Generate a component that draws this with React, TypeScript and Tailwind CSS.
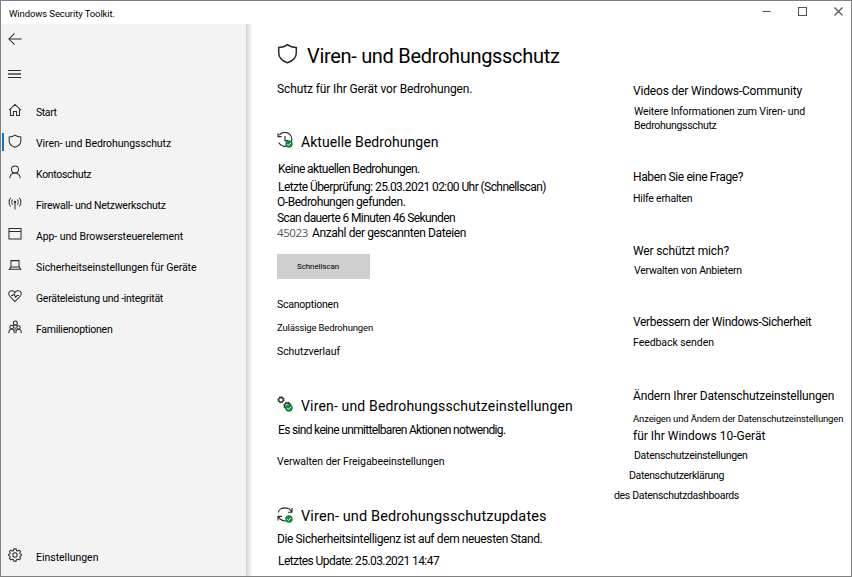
import type { ReactNode } from "react";

function Svg({ size = 14, box = 16, className = "", children }: { size?: number; box?: number; className?: string; children: ReactNode }) {
  return (
    <svg
      width={size}
      height={size}
      viewBox={`0 0 ${box} ${box}`}
      fill="none"
      stroke="#2b2b2b"
      strokeWidth="1.15"
      className={`shrink-0 ${className}`}
    >
      {children}
    </svg>
  );
}

const Shield = () => <path d="M8 1.2C6.2 2.7 4 3.4 1.3 3.4V7.6C1.3 11.2 3.8 13.6 8 15.1C12.2 13.6 14.7 11.2 14.7 7.6V3.4C12 3.4 9.8 2.7 8 1.2Z" />;

const Check = () => (
  <>
    <circle cx="12" cy="12" r="3.7" fill="#10893e" stroke="none" />
    <path d="M10.2 12.1L11.6 13.4L13.9 10.9" stroke="#fff" strokeWidth="1" />
  </>
);

const navItems: { label: string; spacing: string; icon: ReactNode; active?: boolean }[] = [
  {
    label: "Start",
    spacing: "tracking-[-0.4px]",
    icon: <path d="M1.2 8.2L8 1.6L14.8 8.2M2.8 6.8V14.3H6.2V9.6H9.8V14.3H13.2V6.8" />,
  },
  { label: "Viren- und Bedrohungsschutz", spacing: "tracking-[-0.07px]", icon: <Shield />, active: true },
  {
    label: "Kontoschutz",
    spacing: "tracking-[-0.32px]",
    icon: (
      <>
        <circle cx="8" cy="5.2" r="4" />
        <path d="M2 15.2C2.3 11.6 4.6 9.2 8 9.2S13.7 11.6 14 15.2" />
      </>
    ),
  },
  {
    label: "Firewall- und Netzwerkschutz",
    spacing: "tracking-[-0.26px]",
    icon: (
      <>
        <path d="M3.2 2C.6 4.4.6 9.6 3.2 12M12.8 2C15.4 4.4 15.4 9.6 12.8 12M5.4 4C4 5.6 4 8.4 5.4 10M10.6 4C12 5.6 12 8.4 10.6 10M8 7.4V15.4" />
        <circle cx="8" cy="6.8" r=".9" />
      </>
    ),
  },
  {
    label: "App- und Browsersteuerelement",
    spacing: "tracking-[-0.09px]",
    icon: <path d="M1.1 1.7H14.9V13.7H1.1ZM1.1 5.1H14.9" />,
  },
  {
    label: "Sicherheitseinstellungen für Geräte",
    spacing: "tracking-[-0.08px]",
    icon: <path d="M3.4 3H12.6V10.2H3.4ZM3.4 10.2L1.4 12.8H14.6L12.6 10.2" />,
  },
  {
    label: "Geräteleistung und -integrität",
    spacing: "tracking-[-0.28px]",
    icon: (
      <>
        <path d="M8 14.4L1.8 8C.2 6.2.6 3.6 2.5 2.5C4.4 1.4 6.8 2 8 4.2C9.2 2 11.6 1.4 13.5 2.5C15.4 3.6 15.8 6.2 14.2 8Z" />
        <path d="M3.4 7.4H5.2L6.8 5.6L8.8 9.4L10.4 7.4H12.6" />
      </>
    ),
  },
  {
    label: "Familienoptionen",
    spacing: "tracking-[-0.26px]",
    icon: (
      <>
        <circle cx="8.4" cy="3.4" r="2.3" />
        <circle cx="4.2" cy="8.2" r="2.1" />
        <circle cx="12" cy="8.6" r="2" />
        <path d="M1 15C1 12.4 2 10.4 4.2 10.4S7.2 12.4 7.2 15M9 15C9 12.2 10 10.6 12 10.6S15.2 12.2 15.2 15M5.6 6.4C6.4 5.9 7.2 5.7 8.4 5.7S10.6 6 11.2 6.6M8.1 8.4V12" />
      </>
    ),
  },
];

const gear = "M6.7 1L9.3 1L9.7 2.9L11.2 3.5L12.8 2.4L14.4 4L13.4 5.7L14 7L15.2 7.2V8.8L14 9.2L13.4 10.5L14.4 12L12.8 13.6L11.2 12.6L9.7 13.2L9.3 15H6.7L6.3 13.2L4.8 12.6L3.2 13.6L1.6 12L2.6 10.5L2 9.2L.8 8.8V7.2L2 7L2.6 5.7L1.6 4L3.2 2.4L4.8 3.5L6.3 2.9Z";

function Sidebar() {
  return (
    <nav className="flex w-[245px] shrink-0 flex-col bg-[#f3f3f3]">
      <div className="flex h-[30px] items-center pl-[7px]">
        <Svg size={14}>
          <path d="M15.5 8H1M7.5 1.5L1 8L7.5 14.5" />
        </Svg>
      </div>
      <div className="flex h-[43px] items-start pt-4 pl-[7px]">
        <div className="flex w-[13px] flex-col gap-[2px]">
          <span className="h-px bg-[#2b2b2b]" />
          <span className="h-[2px] bg-[#6e6e6e]" />
          <span className="h-px bg-[#2b2b2b]" />
        </div>
      </div>
      <ul>
        {navItems.map((item) => (
          <li key={item.label} className="flex h-[31px] items-center">
            <span className={`mb-[3px] ml-px h-[18px] w-[2px] ${item.active ? "bg-[#0078d4]" : ""}`} />
            <Svg className="mb-[5px] ml-1">{item.icon}</Svg>
            <span className={`ml-[14px] text-[10.5px] whitespace-nowrap ${item.spacing}`}>{item.label}</span>
          </li>
        ))}
      </ul>
      <div className="mt-auto mb-[3px] flex h-[31px] items-center pl-[7px]">
        <Svg className="mb-[5px]">
          <path d={gear} />
          <circle cx="8" cy="8" r="2.5" />
        </Svg>
        <span className="ml-[14px] text-[10.5px] tracking-[-0.02px]">Einstellungen</span>
      </div>
    </nav>
  );
}

function Heading({ icon, className, children }: { icon: ReactNode; className: string; children: ReactNode }) {
  return (
    <h2 className={`flex h-4 items-center whitespace-nowrap ${className}`}>
      <Svg size={16} className="mr-2 mb-1">{icon}</Svg>
      {children}
    </h2>
  );
}

function Line({ className, children }: { className: string; children: ReactNode }) {
  return <p className={`h-[14px] leading-[14px] whitespace-nowrap ${className}`}>{children}</p>;
}

function Content() {
  return (
    <main className="w-[337px] shrink-0 pt-[19px]">
      <h1 className="flex h-6 items-center pt-px text-[20px] tracking-[-0.31px] whitespace-nowrap">
        <Svg size={21} className="mr-[9px] mb-[5px]">
          <Shield />
        </Svg>
        <span className="pt-px">Viren- und Bedrohungsschutz</span>
      </h1>
      <Line className="mt-[15px] text-[12px] tracking-[-0.12px]">Schutz für Ihr Gerät vor Bedrohungen.</Line>

      <section className="mt-[38px]">
        <Heading
          className="text-[14px] tracking-[0.05px]"
          icon={
            <>
              <path d="M2.2 3.2A7 7 0 1 1 1.6 10.6M1 1.2V4.6H4.6M8 4V8.6H11" />
              <Check />
            </>
          }
        >
          Aktuelle Bedrohungen
        </Heading>
        <Line className="mt-3 pl-px text-[12px] tracking-[-0.59px]">Keine aktuellen Bedrohungen.</Line>
        <Line className="mt-1 pl-px text-[12px] tracking-[-0.57px]">Letzte Überprüfung: 25.03.2021 02:00 Uhr (Schnellscan)</Line>
        <Line className="mt-px text-[12px] tracking-[-0.46px]">O-Bedrohungen gefunden.</Line>
        <Line className="mt-0.5 text-[12px] tracking-[-0.61px]">Scan dauerte 6 Minuten 46 Sekunden</Line>
        <Line className="mt-px flex text-[12px] tracking-[-0.4px]">
          <span className="w-[35px] font-['Open_Sans',sans-serif] text-[11.5px] tracking-[-0.4px] text-[#555]">45023</span>
          <span>Anzahl der gescannten Dateien</span>
        </Line>
        <button className="mt-3.5 flex h-[25px] w-[93px] items-center bg-[#cfcfcf] pt-px pl-5 text-[8px] tracking-[-0.09px]">Schnellscan</button>
        <Line className="mt-[18px] pt-px text-[10.5px] tracking-[-0.23px]">Scanoptionen</Line>
        <Line className="mt-2.5 text-[9.5px] tracking-[-0.16px]">Zulässige Bedrohungen</Line>
        <Line className="mt-[9px] pt-px text-[10.5px] tracking-[-0.06px]">Schutzverlauf</Line>
      </section>

      <section className="mt-10">
        <Heading
          className="text-[14px] tracking-[0.16px]"
          icon={
            <>
              <circle cx="4" cy="3.8" r="2.3" strokeWidth="1.3" />
              <circle cx="4" cy="3.8" r="3.2" strokeWidth="1" strokeDasharray="1.25 1.26" />
              <circle cx="10.4" cy="9.8" r="2.8" strokeWidth="1.3" />
              <circle cx="10.4" cy="9.8" r="3.7" strokeWidth="1" strokeDasharray="1.45 1.46" />
              <Check />
            </>
          }
        >
          Viren- und Bedrohungsschutzeinstellungen
        </Heading>
        <Line className="mt-[9px] pl-px text-[12px] tracking-[-0.67px]">Es sind keine unmittelbaren Aktionen notwendig.</Line>
        <Line className="mt-[17px] pt-px text-[10.5px] tracking-[-0.06px]">Verwalten der Freigabeeinstellungen</Line>
      </section>

      <section className="mt-[41px]">
        <Heading
          className="text-[14.5px] tracking-[0.13px]"
          icon={
            <>
              <path d="M1.2 5.4C2.2 2.2 5 .8 8 .8C10.8 .8 13.4 2.2 14.6 5M15 1V5.2H11M9 14C5.8 14.2 2.8 12.6 1.4 9.6M1 13.4V9.4H5" />
              <Check />
            </>
          }
        >
          Viren- und Bedrohungsschutzupdates
        </Heading>
        <Line className="mt-[7px] text-[12px] tracking-[-0.38px]">Die Sicherheitsintelligenz ist auf dem neuesten Stand.</Line>
        <Line className="mt-2 pl-px text-[12px] tracking-[-0.57px]">Letztes Update: 25.03.2021 14:47</Line>
      </section>
    </main>
  );
}

function HelpPanel() {
  return (
    <aside className="pt-[60px]">
      <section className="pl-[19px]">
        <Line className="text-[12px] tracking-[-0.17px]">Videos der Windows-Community</Line>
        <Line className="mt-1.5 pt-px pl-px text-[10.5px] tracking-[-0.15px]">Weitere Informationen zum Viren- und</Line>
        <Line className="pt-px pl-px text-[10.5px] tracking-[-0.3px]">Bedrohungsschutz</Line>
      </section>
      <section className="mt-[38px] pl-[19px]">
        <Line className="text-[12px] tracking-[-0.38px]">Haben Sie eine Frage?</Line>
        <Line className="mt-[7px] pt-px text-[10.5px] tracking-[-0.2px]">Hilfe erhalten</Line>
      </section>
      <section className="mt-[39px] pl-[19px]">
        <Line className="text-[12px] tracking-[-0.14px]">Wer schützt mich?</Line>
        <Line className="mt-[5px] pt-px pl-px text-[10.5px] tracking-[-0.25px]">Verwalten von Anbietern</Line>
      </section>
      <section className="mt-[38px] pl-[19px]">
        <Line className="text-[12px] tracking-[-0.32px]">Verbessern der Windows-Sicherheit</Line>
        <Line className="mt-1.5 pt-px text-[10.5px] tracking-[-0.06px]">Feedback senden</Line>
      </section>
      <section className="mt-10">
        <Line className="pl-[19px] text-[12px] tracking-[-0.14px]">Ändern Ihrer Datenschutzeinstellungen</Line>
        <Line className="mt-2 pt-px pl-[19px] text-[9.5px] tracking-[-0.15px]">Anzeigen und Ändern der Datenschutzeinstellungen</Line>
        <Line className="mt-1 pl-[19px] text-[12px]">für Ihr Windows 10-Gerät</Line>
        <Line className="mt-[5px] pt-px pl-5 text-[10.5px] tracking-[-0.3px]">Datenschutzeinstellungen</Line>
        <Line className="mt-1.5 pt-px pl-[15px] text-[10.5px] tracking-[-0.36px]">Datenschutzerklärung</Line>
        <Line className="mt-1.5 pt-px text-[10.5px] tracking-[-0.33px]">des Datenschutzdashboards</Line>
      </section>
    </aside>
  );
}

export default function App() {
  return (
    <div className="flex h-[577px] w-[852px] flex-col overflow-hidden border border-[#808080] bg-white font-[Roboto,sans-serif] text-black">
      <header className="flex h-[23px] shrink-0 items-center justify-between pr-2 pl-2">
        <span className="pt-[4px] text-[9.5px] tracking-[-0.1px]">Windows Security Toolkit.</span>
        <div className="flex items-center gap-[27px] pb-[2px]">
          <Svg size={9} box={9}>
            <path d="M.5 4.5H8.5" stroke="#555" />
          </Svg>
          <Svg size={9} box={9}>
            <path d="M.5 .5H8.5V8.5H.5Z" stroke="#555" />
          </Svg>
          <Svg size={9} box={9}>
            <path d="M.5 .5L8.5 8.5M8.5 .5L.5 8.5" stroke="#555" />
          </Svg>
        </div>
      </header>
      <div className="flex min-h-0 flex-1">
        <Sidebar />
        <div className="w-[7px] bg-linear-to-r from-[#d6d6d6] to-white" />
        <div className="flex pl-6">
          <Content />
          <HelpPanel />
        </div>
      </div>
    </div>
  );
}
